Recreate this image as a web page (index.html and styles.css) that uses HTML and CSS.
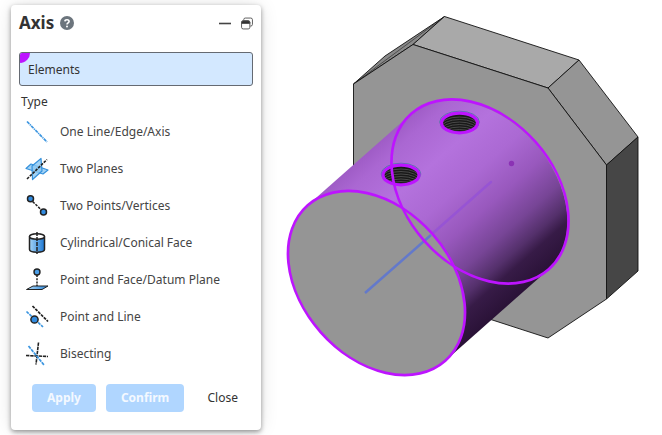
FILE: index.html
```html
<!DOCTYPE html>
<html lang="en">
<head>
<meta charset="utf-8">
<meta name="viewport" content="width=device-width, initial-scale=1">
<title>Axis</title>
<link rel="stylesheet" href="styles.css">
</head>
<body>
<main class="workspace">
  <form class="panel">
    <header class="panel-head">
      <h1 class="title">Axis</h1>
      <button class="tool help" type="button" aria-label="Help">
        <svg width="14" height="14" viewBox="0 0 14 14"><circle cx="7" cy="7" r="7" fill="#6c757d"/><path d="M4.9 5.4C5 3.2 9.1 3.2 9.1 5.5C9.1 7 7 6.9 7 8.6" fill="none" stroke="#fff" stroke-width="1.6"/><circle cx="7" cy="10.6" r="1" fill="#fff"/></svg>
      </button>
      <button class="tool" type="button" aria-label="Minimize">
        <svg width="12" height="12" viewBox="0 0 12 12"><path d="M0 6.5H12" stroke="#444" stroke-width="1.6"/></svg>
      </button>
      <button class="tool" type="button" aria-label="Restore">
        <svg width="12" height="13" viewBox="0 0 13 13" fill="none" stroke="#555"><path d="M3 3V2.2Q3 .6 4.6 .6H10.6Q12.4 .6 12.4 2.4V7.4Q12.4 9.3 10.5 9.3H10"/><rect x=".6" y="3.6" width="9" height="8.8" rx="1.8"/><path d="M.6 6.5V5.3Q.6 3.6 2.3 3.6H7.9Q9.6 3.6 9.6 5.3V6.5Z" fill="#333"/></svg>
      </button>
    </header>
    <div class="field">
      <input class="elements" type="text" value="Elements" aria-label="Elements" readonly>
      <span class="marker"></span>
    </div>
    <h2 class="label">Type</h2>
    <ul class="types">
      <li><button class="type" type="button">
        <svg class="icon" viewBox="0 0 24 24"><path d="M2 1.500L22 22" stroke="#3d96e0" stroke-width="1.700" stroke-dasharray="3.400 .7 1.200 .7"/></svg>One Line/Edge/Axis</button></li>
      <li><button class="type" type="button">
        <svg class="icon" viewBox="0 0 24 24"><g fill="#8cc8f2" fill-opacity=".8" stroke="#3591dc" stroke-width="1.200" stroke-linejoin="round"><path d="M1 11.500L6 7L23 13L18 17Z"/><path d="M7 9L16 1.500L17 14L7.500 22.500Z"/></g><path d="M2 22L22 2.500" stroke="#222" stroke-width="1.600" stroke-dasharray="2.800 1.100"/></svg>Two Planes</button></li>
      <li><button class="type" type="button">
        <svg class="icon" viewBox="0 0 24 24"><path d="M5 5L18.500 18" stroke="#222" stroke-width="1.500" stroke-dasharray="2.600 1.200"/><circle cx="5.500" cy="4.800" r="3" fill="#318be0" stroke="#222" stroke-width="1.500"/><circle cx="18.500" cy="18" r="3" fill="#318be0" stroke="#222" stroke-width="1.500"/></svg>Two Points/Vertices</button></li>
      <li><button class="type" type="button">
        <svg class="icon" viewBox="0 0 24 24"><defs><linearGradient id="tube"><stop stop-color="#a5d4f7"/><stop offset="1" stop-color="#1c78d4"/></linearGradient></defs><path d="M4.500 5.500V18.500C4.500 22 19.500 22 19.500 18.500V5.500" fill="url(#tube)" stroke="#222" stroke-width="1.500"/><ellipse cx="12" cy="5.500" rx="7.500" ry="2.800" fill="#fff" stroke="#222" stroke-width="1.500"/><path d="M12 1V23" stroke="#222" stroke-width="1.500" stroke-dasharray="4 1"/></svg>Cylindrical/Conical Face</button></li>
      <li><button class="type" type="button">
        <svg class="icon" viewBox="0 0 24 24"><defs><linearGradient id="datum"><stop stop-color="#b5dcf8"/><stop offset="1" stop-color="#2383dc"/></linearGradient></defs><path d="M1.500 21.500L8 18H23L17 21.500Z" fill="url(#datum)" stroke="#222"/><path d="M12 7V18" stroke="#222" stroke-width="1.500" stroke-dasharray="2 1.200"/><circle cx="12" cy="4" r="3" fill="#4a9ee8" stroke="#222" stroke-width="1.400"/></svg>Point and Face/Datum Plane</button></li>
      <li><button class="type" type="button">
        <svg class="icon" viewBox="0 0 24 24"><path d="M7.500 1L23 16.500" stroke="#222" stroke-width="1.700" stroke-dasharray="3 1"/><path d="M1.500 6.500L18 22" stroke="#3d96e0" stroke-width="1.700" stroke-dasharray="3 1"/><circle cx="9.500" cy="14.500" r="3.600" fill="#318be0" stroke="#222" stroke-width="1.500"/></svg>Point and Line</button></li>
      <li><button class="type" type="button">
        <svg class="icon" viewBox="0 0 24 24"><path d="M13.500 .5L11 22.500M1 13.500L23 14.500" stroke="#222" stroke-width="1.600" stroke-dasharray="3.400 .8"/><path d="M3.500 4L19 23" stroke="#3d96e0" stroke-width="1.700" stroke-dasharray="3.400 .8"/></svg>Bisecting</button></li>
    </ul>
    <footer class="actions">
      <button class="btn primary" type="button" disabled>Apply</button>
      <button class="btn primary" type="button" disabled>Confirm</button>
      <button class="btn close" type="button">Close</button>
    </footer>
  </form>
  <div class="stage">
    <svg class="model" viewBox="272 0 390 435" role="img" aria-label="Octagonal plate with a highlighted cylindrical boss">
      <defs>
        <linearGradient id="shade" gradientUnits="userSpaceOnUse" x1="411" y1="114" x2="548" y2="269">
          <stop offset="0" stop-color="#9f5cc6"/><stop offset=".08" stop-color="#aa67d2"/><stop offset=".25" stop-color="#b472dd"/><stop offset=".42" stop-color="#ab69d3"/><stop offset=".58" stop-color="#9858bd"/><stop offset=".73" stop-color="#774596"/><stop offset=".83" stop-color="#54306b"/><stop offset=".89" stop-color="#371b47"/><stop offset="1" stop-color="#2a1237"/>
        </linearGradient>
        <clipPath id="bore"><ellipse cx="0" cy="0" rx="17.500" ry="9"/></clipPath>
        <g id="hole">
          <ellipse cx="0" cy="-1" rx="19.800" ry="10.800" fill="none" stroke="#507fa5"/>
          <ellipse rx="18" ry="9.500" fill="#191919"/>
          <g clip-path="url(#bore)" fill="none" stroke="#555" stroke-width=".8">
            <ellipse cy="3" rx="19" ry="9"/><ellipse cy="5.500" rx="19" ry="9"/><ellipse cy="8" rx="19" ry="9"/><ellipse cy="10.500" rx="19" ry="9"/><ellipse cy="13" rx="19" ry="9"/><ellipse cy="15.500" rx="19" ry="9"/>
          </g>
          <ellipse rx="18" ry="9.800" fill="none" stroke="#bd14ff" stroke-width="3.200"/>
        </g>
      </defs>
      <g stroke="#111" stroke-width=".9" stroke-linejoin="round">
        <path d="M353.500 84L385 56L444.500 16.500L413 44.500Z" fill="#898989"/>
        <path d="M353.500 84L444.500 16.500" fill="none" stroke-width=".5"/>
        <path d="M413 44.500L444.500 16.500L579 60L548 88Z" fill="#a9a9a9"/>
        <path d="M548 88L579 60L638 137L606.500 165Z" fill="#959595"/>
        <path d="M606.500 165L638 137V271L606.500 299Z" fill="#464646"/>
        <path d="M353.500 84L413 44.500L548 88L606.500 165V299L548 338L412 294L353.500 218Z" fill="#959595"/>
      </g>
      <path d="M307.700 205.300L411.200 113.800A103.800 74.400 48.500 0 1 548.800 269.200L445.300 360.700Z" fill="url(#shade)"/>
      <use href="#hole" x="459.500" y="123"/>
      <use href="#hole" x="401" y="175"/>
      <circle cx="511.500" cy="163.500" r="2.700" fill="#8b32b4"/>
      <path d="M432 234L491 182" stroke="#9754d4" stroke-width="2.500" stroke-linecap="round"/>
      <ellipse cx="376.500" cy="283" rx="103.800" ry="74.400" transform="rotate(48.500 376.500 283)" fill="#959595"/>
      <path d="M365 293L431 235" stroke="#6379cb" stroke-width="2.500"/>
      <g fill="none" stroke="#bd14ff" stroke-width="2.700">
        <ellipse cx="376.500" cy="283" rx="103.800" ry="74.400" transform="rotate(48.500 376.500 283)"/>
        <ellipse cx="480" cy="191.500" rx="103.800" ry="74.400" transform="rotate(48.500 480 191.500)"/>
      </g>
    </svg>
  </div>
</main>
</body>
</html>
```
FILE: styles.css
```css
* { box-sizing: border-box; }
body {
  margin: 0;
  background: #fff;
  color: #333;
  font: 12px/20px "Noto Sans", "Open Sans", sans-serif;
}
button, input { font: inherit; color: inherit; }
button { border: 0; padding: 0; background: none; }
.workspace { display: flex; align-items: flex-start; }
.panel {
  flex: 0 0 250px;
  margin: 5px 11px;
  padding: 8px 8px 18px;
  border-radius: 4px;
  background: #fff;
  box-shadow: 0 2px 5px rgba(0, 0, 0, .4), 0 0 20px -2px rgba(0, 0, 0, .14);
}
.panel-head { display: flex; align-items: center; gap: 10px; height: 20px; }
.title { margin: 0; font-size: 17px; line-height: 20px; font-weight: 700; }
.tool { display: flex; }
.help { margin-left: -4px; margin-right: auto; }
.field { position: relative; margin-top: 19px; }
.elements {
  display: block;
  width: 100%;
  height: 34px;
  padding: 0 8px;
  border: 1px solid #656a72;
  border-radius: 3px;
  background: #d3e8ff;
}
.marker {
  position: absolute;
  left: 1px;
  top: 1px;
  width: 10px;
  height: 10px;
  border-radius: 2px 0 10px 0;
  background: #bd14ff;
}
.label { margin: 6px 2px 0; font-size: 12px; line-height: 20px; font-weight: 400; }
.types { margin: 1px 0 0; padding: 0; list-style: none; }
.type {
  display: flex;
  align-items: center;
  gap: 11px;
  width: 100%;
  height: 37px;
  padding-left: 6px;
  text-align: left;
  color: #444;
}
.icon { width: 24px; height: 24px; fill: none; }
.actions { display: flex; gap: 10px; margin: 12px 13px 0; }
.btn { height: 28px; padding: 0 15px; border-radius: 4px; }
.primary { background: #b0d6ff; color: #f4f9ff; font-weight: 700; }
.close { margin-left: auto; padding: 0 2px; }
.stage { flex: 1; min-width: 0; }
.model { display: block; width: 100%; height: auto; }
```
